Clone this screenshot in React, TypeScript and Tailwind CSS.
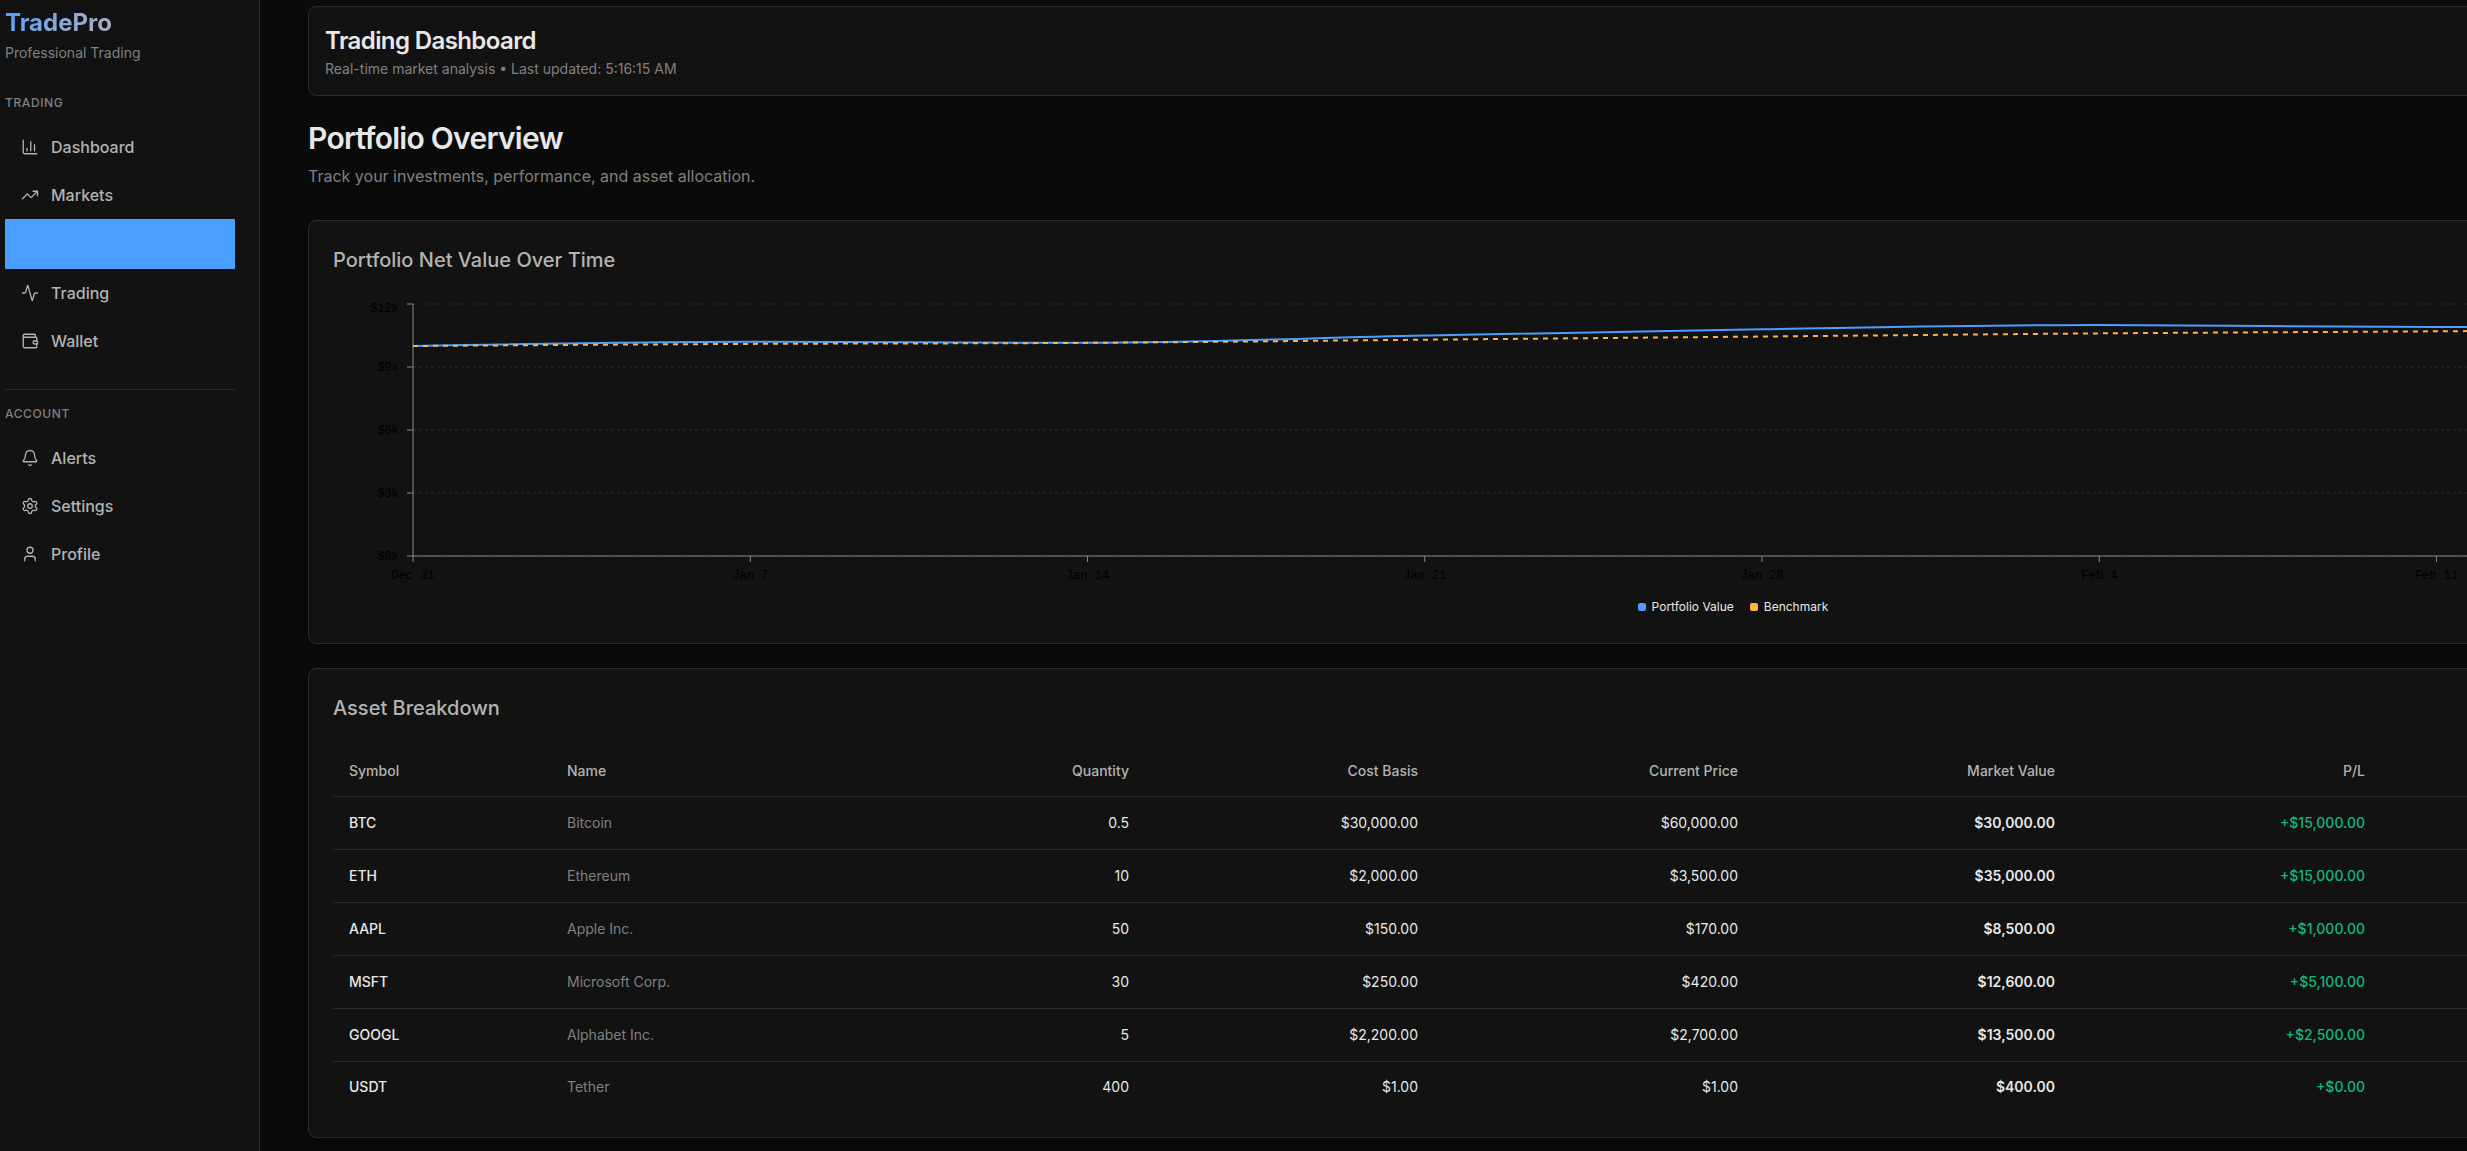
import React from "react";
import { Activity, Bell, ChartColumn, PieChart, Settings, TrendingUp, User, Wallet } from "lucide-react";

type NavItem = { label: string; icon: React.ElementType; active?: boolean };

const trading: NavItem[] = [
  { label: "Dashboard", icon: ChartColumn },
  { label: "Markets", icon: TrendingUp },
  { label: "Portfolio", icon: PieChart, active: true },
  { label: "Trading", icon: Activity },
  { label: "Wallet", icon: Wallet },
];

const account: NavItem[] = [
  { label: "Alerts", icon: Bell },
  { label: "Settings", icon: Settings },
  { label: "Profile", icon: User },
];

const assets = [
  ["BTC", "Bitcoin", "0.5", "$30,000.00", "$60,000.00", "$30,000.00", "+$15,000.00"],
  ["ETH", "Ethereum", "10", "$2,000.00", "$3,500.00", "$35,000.00", "+$15,000.00"],
  ["AAPL", "Apple Inc.", "50", "$150.00", "$170.00", "$8,500.00", "+$1,000.00"],
  ["MSFT", "Microsoft Corp.", "30", "$250.00", "$420.00", "$12,600.00", "+$5,100.00"],
  ["GOOGL", "Alphabet Inc.", "5", "$2,200.00", "$2,700.00", "$13,500.00", "+$2,500.00"],
  ["USDT", "Tether", "400", "$1.00", "$1.00", "$400.00", "+$0.00"],
];

function Nav({ title, items }: { title: string; items: NavItem[] }) {
  return (
    <nav aria-label={title}>
      <h2 className="text-xs leading-5 font-medium tracking-wider text-[#808080] uppercase">{title}</h2>
      <ul className="mt-2.5">
        {items.map(({ label, icon: Icon, active }) => (
          <li key={label}>
            {active ? (
              <a href="#" aria-label={label} aria-current="page" className="block h-[50px] bg-[#4a9eff]" />
            ) : (
              <a href="#" className="flex h-12 items-center gap-3 px-4 text-base font-medium text-[#b3b3b3]">
                <Icon size={18} strokeWidth={1.75} />
                {label}
              </a>
            )}
          </li>
        ))}
      </ul>
    </nav>
  );
}

const LEFT = 80;
const RIGHT = 2778;
const TOP = 5;
const BASE = 257;
const STEP = (RIGHT - LEFT) / 8;
const days = ["Dec 31", "Jan 7", "Jan 14", "Jan 21", "Jan 28", "Feb 4", "Feb 11"];
const portfolio = [10000, 10200, 10150, 10500, 10800, 11000, 10900, 11100, 11300];
const benchmark = [10000, 10100, 10150, 10300, 10450, 10600, 10700, 10800, 10900];

function curve(values: number[]) {
  const pts = values.map((v, i) => [LEFT + i * STEP, BASE - (v * (BASE - TOP)) / 12000]);
  const slope = pts.map((p, i) => {
    if (i === 0 || i === pts.length - 1) return null;
    const a = (p[1] - pts[i - 1][1]) / STEP;
    const b = (pts[i + 1][1] - p[1]) / STEP;
    const mid = (a + b) / 2;
    return (Math.sign(a) + Math.sign(b)) * Math.min(Math.abs(a), Math.abs(b), 0.5 * Math.abs(mid));
  });
  const at = (i: number) => {
    const s = slope[i];
    if (s !== null) return s;
    const j = i === 0 ? 1 : i - 1;
    const secant = (pts[j][1] - pts[i][1]) / (pts[j][0] - pts[i][0]);
    return (3 * secant - (slope[j] ?? 0)) / 2;
  };
  let d = `M${pts[0][0]},${pts[0][1]}`;
  for (let i = 1; i < pts.length; i++) {
    const [x0, y0] = pts[i - 1];
    const [x1, y1] = pts[i];
    const dx = (x1 - x0) / 3;
    d += `C${x0 + dx},${y0 + dx * at(i - 1)},${x1 - dx},${y1 - dx * at(i)},${x1},${y1}`;
  }
  return d;
}

function ValueChart() {
  return (
    <div className="h-80">
      <svg className="block h-[296px] w-full" role="img" aria-label="Portfolio value and benchmark over time">
        {[12, 9, 6, 3, 0].map((v, i) => {
          const y = TOP + i * 63;
          return (
            <g key={v}>
              <line x1={LEFT} x2={RIGHT} y1={y} y2={y} stroke="#2a2a2a" strokeDasharray="3 3" />
              <line x1={LEFT - 6} x2={LEFT} y1={y} y2={y} stroke="#888" />
              <text x={LEFT - 14} y={i === 0 ? y + 8 : y + 4} textAnchor="end" className="fill-black font-['Liberation_Mono',monospace] text-xs">
                ${v}k
              </text>
            </g>
          );
        })}
        <line x1={LEFT} x2={LEFT} y1={TOP} y2={BASE} stroke="#888" />
        <line x1={LEFT} x2={RIGHT} y1={BASE} y2={BASE} stroke="#888" />
        {days.map((d, i) => (
          <g key={d}>
            <line x1={LEFT + i * STEP} x2={LEFT + i * STEP} y1={BASE} y2={BASE + 6} stroke="#888" />
            <text x={LEFT + i * STEP} y={BASE + 23} textAnchor="middle" className="fill-black font-['Liberation_Mono',monospace] text-xs">
              {d}
            </text>
          </g>
        ))}
        <path d={curve(portfolio)} fill="none" stroke="#4a9eff" strokeWidth="2" />
        <path d={curve(benchmark)} fill="none" stroke="#ffb347" strokeWidth="2" strokeDasharray="5 5" />
      </svg>
      <ul className="flex h-6 items-center justify-center gap-4 text-xs text-[#e8e8e8]">
        <li className="flex items-center gap-1.5">
          <span className="size-2 rounded-xs bg-[#4a9eff]" />
          Portfolio Value
        </li>
        <li className="flex items-center gap-1.5">
          <span className="size-2 rounded-xs bg-[#ffb347]" />
          Benchmark
        </li>
      </ul>
    </div>
  );
}

const columns = [
  { title: "Symbol", head: "w-[218px] text-left", cell: "text-left font-medium text-[#e8e8e8]" },
  { title: "Name", head: "w-[349px] text-left", cell: "text-left text-[#808080]" },
  { title: "Quantity", head: "w-[245px] text-right", cell: "text-right text-[#e8e8e8]" },
  { title: "Cost Basis", head: "w-[289px] text-right", cell: "text-right text-[#e8e8e8]" },
  { title: "Current Price", head: "w-[320px] text-right", cell: "text-right text-[#e8e8e8]" },
  { title: "Market Value", head: "w-[317px] text-right", cell: "text-right font-semibold text-[#e8e8e8]" },
  { title: "P/L", head: "w-[310px] text-right", cell: "text-right font-medium text-[#10b981]" },
];

function AssetTable() {
  return (
    <table className="w-full table-fixed border-collapse text-sm">
      <thead>
        <tr className="h-[49px] border-b border-[#2a2a2a] text-[#b3b3b3]">
          {columns.map((c) => (
            <th key={c.title} scope="col" className={`px-4 font-medium ${c.head}`}>
              {c.title}
            </th>
          ))}
          <td />
        </tr>
      </thead>
      <tbody>
        {assets.map((row) => (
          <tr key={row[0]} className="h-[53px] border-b border-[#2a2a2a] last:h-[52px] last:border-b-0">
            {row.map((value, i) => (
              <td key={i} className={`px-4 ${columns[i].cell}`}>
                {value}
              </td>
            ))}
            <td />
          </tr>
        ))}
      </tbody>
    </table>
  );
}

function Card({ title, children }: { title: string; children: React.ReactNode }) {
  return (
    <section className="rounded-lg border border-[#2a2a2a] bg-[#121212] p-6 shadow-md">
      <h2 className="mb-6 text-xl leading-[30px] font-medium text-[#b3b3b3]">{title}</h2>
      {children}
    </section>
  );
}

export default function App() {
  return (
    <div className="flex min-h-screen bg-[#0a0a0a] font-['Inter',sans-serif]">
      <aside className="w-[260px] shrink-0 border-r border-[#2a2a2a] bg-[#121212] pt-[5px] pr-6 pl-[5px]">
        <div className="bg-linear-135 from-[#4a9eff] to-[#ffb347] bg-clip-text text-2xl leading-9 font-bold text-transparent">TradePro</div>
        <p className="text-sm leading-6 text-[#808080]">Professional Trading</p>
        <div className="mt-7">
          <Nav title="Trading" items={trading} />
        </div>
        <div className="mt-6 border-t border-[#2a2a2a] pt-3.5">
          <Nav title="Account" items={account} />
        </div>
      </aside>
      <main className="min-w-0 flex-1 overflow-hidden pt-1.5 pb-3 pl-12">
        <div className="w-[132%]">
          <header className="h-[90px] rounded-lg border border-[#2a2a2a] bg-[#121212] px-4 pt-4 shadow-md">
            <h1 className="text-2xl leading-9 font-semibold tracking-tight text-[#e8e8e8]">Trading Dashboard</h1>
            <p className="text-sm leading-5 text-[#808080]">Real-time market analysis • Last updated: 5:16:15 AM</p>
          </header>
          <h2 className="mt-5 text-3xl leading-11 font-semibold tracking-tight text-[#e8e8e8]">Portfolio Overview</h2>
          <p className="mt-1 mb-8 text-base leading-6 text-[#808080]">Track your investments, performance, and asset allocation.</p>
          <div className="flex flex-col gap-6">
            <Card title="Portfolio Net Value Over Time">
              <ValueChart />
            </Card>
            <Card title="Asset Breakdown">
              <AssetTable />
            </Card>
          </div>
        </div>
      </main>
    </div>
  );
}
